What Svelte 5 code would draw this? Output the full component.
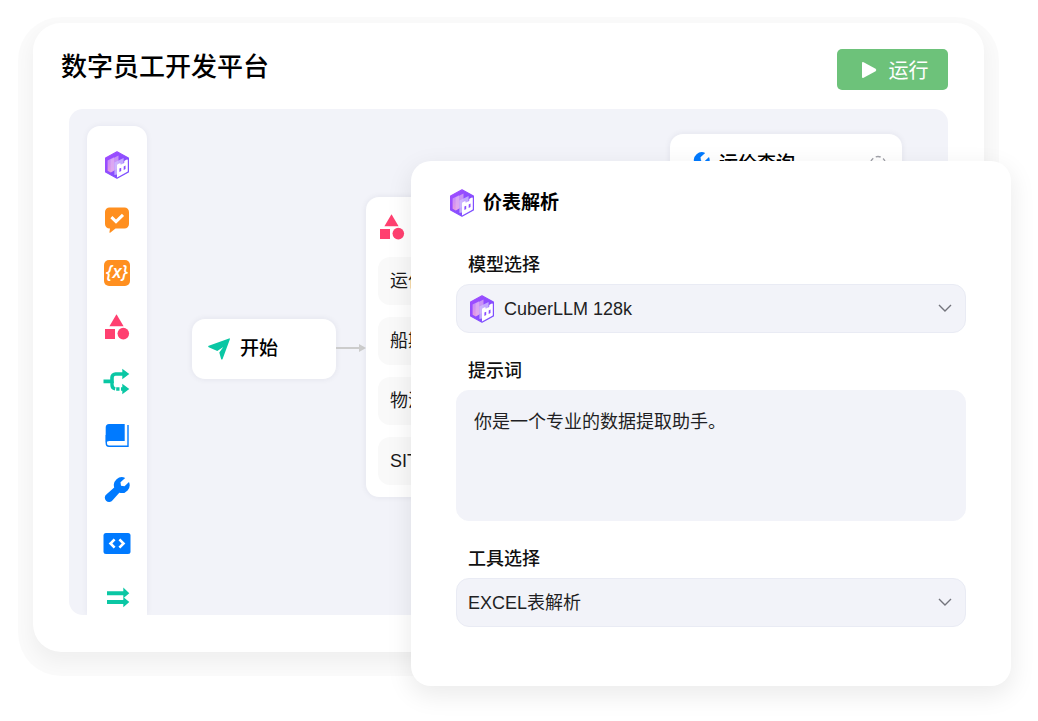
<script lang="ts">
  const tools = [
    { icon: 'model', label: '模型' },
    { icon: 'reply', label: '回复' },
    { icon: 'variable', label: '变量' },
    { icon: 'intent', label: '意图' },
    { icon: 'branch', label: '分支' },
    { icon: 'book', label: '知识库' },
    { icon: 'wrench', label: '工具' },
    { icon: 'code', label: '代码' },
    { icon: 'batch', label: '批处理' }
  ];

  const intents = ['运价', '船期', '物流', 'SIT'];

  let model = $state('CuberLLM 128k');
  let prompt = $state('你是一个专业的数据提取助手。');
  let tool = $state('EXCEL表解析');
</script>

{#snippet icon(name: string)}
  <svg class="icon" viewBox="0 0 28 28" aria-hidden="true">
    {#if name === 'model'}
      <defs>
        <linearGradient id="hex" x1="0" y1="0" x2="1" y2="1">
          <stop offset="0" stop-color="#a44bff" />
          <stop offset="1" stop-color="#7650ff" />
        </linearGradient>
        <linearGradient id="pane" x1="0" y1="0" x2="0" y2="1">
          <stop offset="0" stop-color="#c08cff" />
          <stop offset="1" stop-color="#e79ade" />
        </linearGradient>
      </defs>
      <path d="M14 .8 25.4 7v14L14 27.2 2.6 21V7z" fill="url(#hex)" stroke="url(#hex)" stroke-width="1.2" stroke-linejoin="round" />
      <path d="M4.600 9.600 11 6.200v13.200l-3.200 2.200-3.200-1.800z" fill="url(#pane)" />
      <path d="M7.600 8.600 15.500 4.600v12.600l-7.900 4z" fill="#e0b0f2" opacity=".7" />
      <path d="m11.400 11.600 9.200-4.600v8l-6.600 4v4.400l-2.600.6z" fill="#cdb8ff" opacity=".85" />
      <path d="M14 14.400q0-.8.7-1.200l2-.9q.8-.3.900.5v.9l3.600-1.800V10.600q0-.8.7-1.200l2-.9q.9-.3.900.6v11.300L14 26.400z" fill="#fff" />
      <path d="m16.400 17.600 1.800-.9v3.400l-1.800.9zM20.700 15.500l1.800-.9V18l-1.800.9z" fill="#8a4dff" />
    {:else if name === 'reply'}
      <path d="M6.500 2.500h15A4.500 4.500 0 0 1 26 7v12a4.500 4.500 0 0 1-4.500 4.500H12.500L7.500 27.600q-1.300.6-1-.8l.5-3.300H6.500A4.500 4.500 0 0 1 2 19V7a4.500 4.500 0 0 1 4.500-4.500z" fill="#ff8f1f" />
      <path d="m8.400 12.200 4.600 4.400 7-6.800" fill="none" stroke="#fff" stroke-width="3" />
    {:else if name === 'variable'}
      <rect x="1" y="1" width="26" height="26" rx="5" fill="#ff8f1f" />
      <text class="var" x="14" y="19" text-anchor="middle">{'{x}'}</text>
    {:else if name === 'intent'}
      <path d="M13.500 1.200 20.600 13.200H6.400z" fill="#ff4070" />
      <rect x="2" y="16" width="10" height="10" fill="#ff4070" />
      <circle cx="20.300" cy="20.600" r="5.800" fill="#ff4070" />
    {:else if name === 'branch'}
      <path d="M.5 14.400H9M9 16v-5.500a3.500 3.500 0 0 1 3.500-3.500H20" fill="none" stroke="#0ac7a4" stroke-width="3.600" />
      <path d="M9 14.400V18a4 4 0 0 0 3.200 3.900M13.200 22h3.300M18 22h2" fill="none" stroke="#0ac7a4" stroke-width="3.400" />
      <path d="m19.300 1.800 7 5.200-7 5.200zM19.300 16.800l7 5.200-7 5.200z" fill="#0ac7a4" />
    {:else if name === 'book'}
      <path d="M6 3h15.700v17H6.200q-2 0-3.500 1.600V6.500A3.500 3.500 0 0 1 6 3z" fill="#007aff" />
      <path d="M25 4v21.300H6a2.900 2.900 0 0 1-2.700-3V14" fill="none" stroke="#007aff" stroke-width="1.400" />
    {:else if name === 'wrench'}
      <path d="M22.200 2.900a8 8 0 0 0-11 9.600l-7.600 6.700a4.300 4.300 0 1 0 6 6l6.700-7.500a8 8 0 0 0 9.700-10.800l-4.500 4.300-3.500-.5-.5-3.500z" fill="#007aff" />
    {:else if name === 'code'}
      <rect x=".5" y="4" width="27" height="21" rx="2.500" fill="#007aff" />
      <path d="m11.600 10.400-4.100 4.100 4.100 4.100M16.400 10.400l4.100 4.100-4.100 4.100" fill="none" stroke="#fff" stroke-width="2.600" />
    {:else if name === 'batch'}
      <path d="M4 10.200h17M4 19h17" fill="none" stroke="#0ac7a4" stroke-width="4" />
      <path d="m20.300 4.600 6 5.600-6 5zM20.300 14l6 5-6 5.300z" fill="#0ac7a4" />
    {:else if name === 'start'}
      <path d="M3.800 10.800 24 3.400q1.200-.2.800 1L17.600 24q-.8 1.200-1.500 0l-1.800-6.600 4-5.400-6 4-8.600-3.800q-1.200-.8-.1-1.400z" fill="#0ac7a4" />
    {/if}
  </svg>
{/snippet}

{#snippet chevron()}
  <svg class="chevron" viewBox="0 0 14 8" aria-hidden="true">
    <path d="m1 1 6 6 6-6" fill="none" stroke="#73747c" stroke-width="1.400" />
  </svg>
{/snippet}

<div class="page">
  <main class="platform">
    <header class="top">
      <h1>数字员工开发平台</h1>
      <button class="run">
        <svg viewBox="0 0 16 18" aria-hidden="true">
          <path d="M1 2.200Q1 .4 2.600 1.200l12 6.600q1.400 1.200 0 2.400l-12 6.600Q1 17.600 1 15.800z" fill="#fff" />
        </svg>
        运行
      </button>
    </header>

    <div class="canvas">
      <nav class="toolbar" aria-label="节点">
        {#each tools as item}
          <button class="tool" aria-label={item.label}>{@render icon(item.icon)}</button>
        {/each}
      </nav>

      <div class="node start">
        {@render icon('start')}
        <span>开始</span>
      </div>

      <svg class="edge" viewBox="0 0 30 10" aria-hidden="true">
        <path d="M0 5h24" stroke="#ccc" stroke-width="2" />
        <path d="m23 1 7 4-7 4z" fill="#ccc" />
      </svg>

      <div class="node intent">
        {@render icon('intent')}
        <ul>
          {#each intents as name}
            <li>{name}</li>
          {/each}
        </ul>
      </div>

      <div class="node query">
        {@render icon('wrench')}
        <span>运价查询</span>
        <svg class="status" viewBox="0 0 18 18" aria-hidden="true">
          <circle cx="9" cy="9" r="7.500" fill="none" stroke="#a0a1a8" stroke-width="1.400" stroke-dasharray="5 2.854" stroke-dashoffset="-1.400" />
        </svg>
      </div>
    </div>
  </main>

  <section class="panel">
    <h2>{@render icon('model')}价表解析</h2>
    <form>
      <div class="field">
        <label for="model">模型选择</label>
        <div class="select with-icon">
          {@render icon('model')}
          <select id="model" bind:value={model}>
            <option>CuberLLM 128k</option>
          </select>
          {@render chevron()}
        </div>
      </div>
      <div class="field">
        <label for="prompt">提示词</label>
        <textarea id="prompt" bind:value={prompt} spellcheck="false"></textarea>
      </div>
      <div class="field">
        <label for="tool">工具选择</label>
        <div class="select">
          <select id="tool" bind:value={tool}>
            <option>EXCEL表解析</option>
          </select>
          {@render chevron()}
        </div>
      </div>
    </form>
  </section>
</div>

<style>
  :global(body) {
    background: #fff;
  }

  .page {
    position: relative;
    padding: 23px 54px 69px 33px;
    font-family: "Liberation Sans", "Noto Sans CJK SC", sans-serif;
    color: #000;
  }

  button, select, textarea {
    font: inherit;
    color: inherit;
    box-sizing: border-box;
  }

  button {
    border: none;
    padding: 0;
    cursor: pointer;
  }

  .icon {
    display: block;
    flex: none;
    width: 28px;
    height: 28px;
  }

  .var {
    font: italic 600 18px "Open Sans", sans-serif;
    fill: #fff;
  }

  .platform {
    padding: 26px 36px 37px;
    border-radius: 28px;
    background: #fff;
    box-shadow:
      0 9px 0 15px rgba(0, 0, 0, 0.02),
      0 9px 16px 2px rgba(0, 0, 0, 0.04);
  }

  .top {
    display: flex;
    justify-content: space-between;
    align-items: flex-start;
    margin: 0 0 19px -8px;
  }

  h1 {
    margin: 0;
    font-size: 26px;
    font-weight: 500;
    line-height: 36px;
  }

  .run {
    display: flex;
    align-items: center;
    justify-content: center;
    gap: 12px;
    width: 111px;
    height: 41px;
    padding-left: 4px;
    border-radius: 5px;
    background: #6dc27a;
    color: #fff;
    font-size: 20px;
  }

  .run svg {
    width: 16px;
    height: 18px;
  }

  .canvas {
    position: relative;
    overflow: hidden;
    padding: 17px 18px 0;
    border-radius: 14px;
    background: #f2f3f9;
  }

  .toolbar {
    display: flex;
    flex-direction: column;
    align-items: center;
    gap: 26px;
    width: 60px;
    box-sizing: border-box;
    padding: 25px 0 4px;
    border-radius: 13px 13px 0 0;
    background: #fff;
    box-shadow: 0 0 6px rgba(40, 40, 80, 0.06);
  }

  .tool {
    background: none;
  }

  /* nodes sit at their own place on the canvas */
  .node {
    position: absolute;
    box-sizing: border-box;
    border-radius: 13px;
    background: #fff;
    box-shadow: 0 0 6px rgba(40, 40, 80, 0.08);
    font-size: 19px;
    font-weight: 500;
    line-height: 24px;
  }

  .start {
    left: 123px;
    top: 210px;
    display: flex;
    align-items: center;
    gap: 7px;
    width: 144px;
    height: 60px;
    padding: 0 13px;
  }

  .edge {
    position: absolute;
    left: 267px;
    top: 234px;
    width: 30px;
    height: 10px;
  }

  .intent {
    left: 297px;
    top: 88px;
    width: 232px;
    padding: 16px 12px 12px;
  }

  .intent ul {
    display: grid;
    gap: 12px;
    margin: 16px 0 0;
    padding: 0;
    list-style: none;
  }

  .intent li {
    padding: 0 12px;
    border-radius: 12px;
    background: #f9f9f9;
    color: #1a1a1a;
    font-size: 18px;
    font-weight: 400;
    line-height: 48px;
  }

  .query {
    left: 601px;
    top: 25px;
    display: flex;
    align-items: center;
    gap: 8px;
    width: 232px;
    height: 60px;
    padding: 0 15px 0 13px;
  }

  .status {
    width: 18px;
    height: 18px;
    margin-left: auto;
  }

  .panel {
    position: absolute;
    top: 161px;
    left: 411px;
    right: 27px;
    padding: 28px 45px 59px;
    border-radius: 20px;
    box-sizing: border-box;
    background: #fff;
    box-shadow: 0 8px 24px 2px rgba(0, 0, 0, 0.08);
  }

  h2 {
    display: flex;
    align-items: center;
    gap: 7px;
    margin: 0 0 36px -8px;
    font-size: 19px;
    font-weight: 600;
    line-height: 28px;
  }

  form {
    display: grid;
    gap: 26px;
  }

  .field {
    display: grid;
    gap: 7px;
  }

  label {
    padding-left: 12px;
    color: #111;
    font-size: 18px;
    font-weight: 500;
    line-height: 24px;
  }

  .select {
    position: relative;
  }

  select, textarea {
    display: block;
    width: 100%;
    border: 1px solid #e9ebf4;
    border-radius: 13px;
    background: #f2f3f9;
    color: #1f1f24;
    font-size: 18px;
  }

  select {
    appearance: none;
    height: 49px;
    padding: 0 40px 0 11px;
  }

  .with-icon select {
    padding-left: 47px;
  }

  .select .icon {
    position: absolute;
    left: 12px;
    top: 11px;
  }

  .chevron {
    position: absolute;
    right: 14px;
    top: 20px;
    width: 14px;
    height: 8px;
    pointer-events: none;
  }

  textarea {
    height: 131px;
    padding: 18px 17px;
    border-color: #f2f3f9;
    line-height: 26px;
    resize: none;
  }
</style>
